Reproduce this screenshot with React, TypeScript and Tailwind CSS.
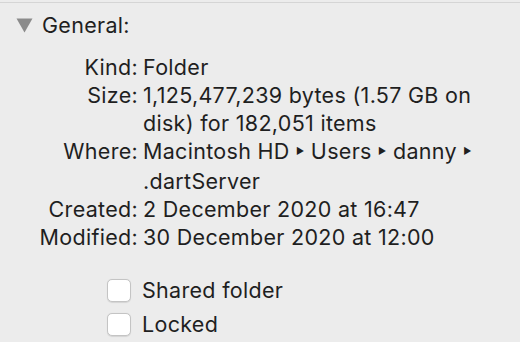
import React from 'react';

const rows: { label: string; value: React.ReactNode }[] = [
  { label: 'Kind:', value: 'Folder' },
  {
    label: 'Size:',
    value: (
      <>
        1,125,477,239 bytes (1.57 GB on
        <br />
        disk) for 182,051 items
      </>
    ),
  },
  {
    label: 'Where:',
    value: (
      <>
        Macintosh HD <Arrow /> Users <Arrow /> danny <Arrow />
        <br />
        .dartServer
      </>
    ),
  },
  { label: 'Created:', value: '2 December 2020 at 16:47' },
  { label: 'Modified:', value: '30 December 2020 at 12:00' },
];

function Arrow() {
  return <span className="inline-block text-[9px] align-middle relative -top-[2px]">▶</span>;
}

function Checkbox({ label }: { label: string }) {
  return (
    <label className="flex items-center gap-[11px] h-[34px]">
      <span className="w-[24px] h-[23px] rounded-[5px] bg-white border border-[#c4c4c4] shadow-[0_0.5px_1px_rgba(0,0,0,0.1)]" />
      <span>{label}</span>
    </label>
  );
}

export default function App() {
  return (
    <div className="w-[520px] h-[342px] overflow-hidden bg-[#ececec] text-[#1f1f1f] font-['Inter','Liberation_Sans',sans-serif] text-[21.5px] tracking-[0.3px]">
      <div className="mt-[2px] h-px bg-[#d5d5d5]" />
      <div className="flex items-center h-[44px] pl-[16px] gap-[9px]">
        <svg width="17" height="15" viewBox="0 0 17 15">
          <path d="M0.5 0.5 H16.5 L8.5 14.5 Z" fill="#8b8b8b" />
        </svg>
        <span>General:</span>
      </div>
      <div className="grid grid-cols-[138px_1fr] gap-x-[5px] leading-[28px] pt-[6px]">
        {rows.map((r) => (
          <React.Fragment key={r.label}>
            <div className="text-right">{r.label}</div>
            <div className="whitespace-nowrap">{r.value}</div>
          </React.Fragment>
        ))}
      </div>
      <div className="pl-[107px] pt-[22px]">
        <Checkbox label="Shared folder" />
        <Checkbox label="Locked" />
      </div>
    </div>
  );
}
